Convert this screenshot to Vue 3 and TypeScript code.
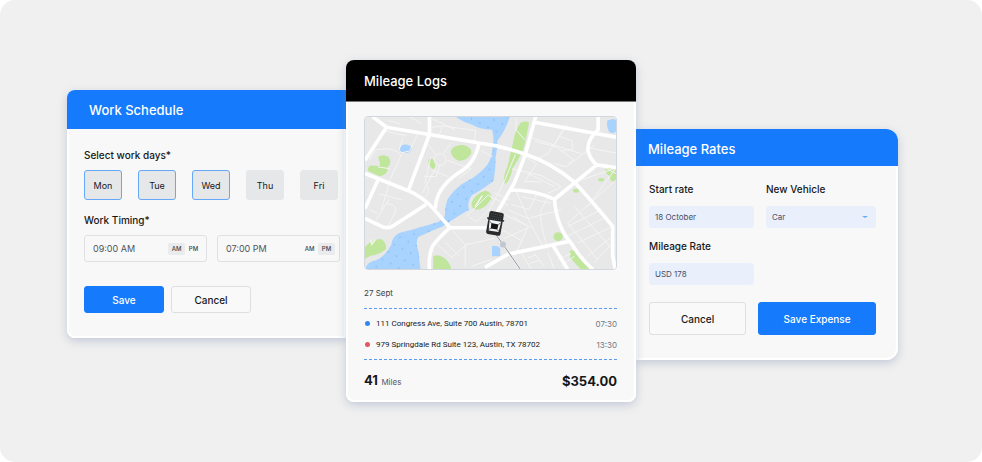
<script setup lang="ts">
import { ref } from 'vue'

interface Day { name: string; on: boolean }
interface Slot { id: string; label: string; value: string; half: 'AM' | 'PM' }
interface Stop { place: string; time: string; kind: 'start' | 'end' }

const days = ref<Day[]>([
  { name: 'Mon', on: true },
  { name: 'Tue', on: true },
  { name: 'Wed', on: true },
  { name: 'Thu', on: false },
  { name: 'Fri', on: false },
])
const slots = ref<Slot[]>([
  { id: 'from', label: 'From', value: '09:00 AM', half: 'AM' },
  { id: 'to', label: 'To', value: '07:00 PM', half: 'PM' },
])
const halves = ['AM', 'PM'] as const
const stops: Stop[] = [
  { place: '111 Congress Ave, Suite 700 Austin, 78701', time: '07:30', kind: 'start' },
  { place: '979 Springdale Rd Suite 123, Austin, TX 78702', time: '13:30', kind: 'end' },
]
const startDate = ref('18 October')
const vehicle = ref('Car')
const rate = ref('USD 178')
</script>

<template>
  <main class="stage">
    <section class="card schedule">
      <h2 class="head">Work Schedule</h2>
      <div class="body">
        <h3 class="label">Select work days*</h3>
        <div class="days">
          <button v-for="d in days" :key="d.name" type="button" class="day" :class="{ on: d.on }" :aria-pressed="d.on" @click="d.on = !d.on">{{ d.name }}</button>
        </div>
        <h3 class="label">Work Timing*</h3>
        <div class="slots">
          <div v-for="s in slots" :key="s.id" class="slot">
            <input :id="s.id" v-model="s.value" type="text" :aria-label="s.label" />
            <button v-for="h in halves" :key="h" type="button" class="half" :class="{ on: s.half === h }" :aria-pressed="s.half === h" @click="s.half = h">{{ h }}</button>
          </div>
        </div>
        <div class="actions">
          <button type="button" class="btn primary">Save</button>
          <button type="button" class="btn">Cancel</button>
        </div>
      </div>
    </section>

    <section class="card logs">
      <h2 class="head">Mileage Logs</h2>
      <div class="body">
        <svg class="map" viewBox="27 18 759 462" preserveAspectRatio="xMidYMid slice" aria-hidden="true">
          <defs>
            <pattern id="dots" width="44" height="36" patternUnits="userSpaceOnUse" patternTransform="rotate(-12)">
              <circle cx="6" cy="6" r="2" fill="#72abea" />
              <circle cx="28" cy="24" r="2" fill="#72abea" />
            </pattern>
            <path id="river" d="M300 18Q325 36 350 42Q372 56 411 58Q418 80 414 104Q412 140 398 162Q385 180 355 202L320 222Q290 245 275 272Q268 300 268 320L250 336Q180 358 130 370Q108 382 107 405Q90 440 60 452Q34 455 27 480H195Q190 450 190 430Q178 400 188 382Q230 362 262 350Q310 318 342 300Q334 280 350 256Q380 240 416 212Q422 180 422 140Q428 110 427 92Q452 60 465 18Z" />
          </defs>
          <rect x="27" y="18" width="759" height="462" fill="#e8e8e8" />
          <use href="#river" fill="#a9d3ff" />
          <use href="#river" fill="url(#dots)" />
          <g fill="#a9d3ff">
            <ellipse cx="150" cy="115" rx="18" ry="13" />
            <path d="M760 30Q778 22 786 28V62Q776 74 764 62Q756 44 760 30Z" />
            <path d="M411 410Q424 405 436 415V440H411Z" />
          </g>
          <g fill="#c0e69c">
            <path d="M66 140Q82 130 98 140Q110 158 96 170Q98 194 72 198Q50 190 36 182Q34 168 46 166Q60 166 72 168Q74 156 66 140Z" />
            <path d="M286 122Q295 102 325 104Q352 112 348 130Q336 150 312 152Q288 144 286 122Z" />
            <path d="M218 150Q226 138 236 150Q244 162 236 178Q220 172 218 150Z" />
            <path d="M350 278Q358 252 390 242Q412 244 408 268Q388 300 362 300Q346 296 350 278Z" />
            <path d="M27 412Q48 388 76 388Q94 400 90 420Q64 438 46 438L27 448Z" />
            <path d="M233 440Q252 432 270 448Q286 464 288 480H233Z" />
            <path d="M498 36Q514 30 523 36Q518 70 505 120Q490 150 474 174Q460 226 448 220Q444 196 458 170Q466 130 474 100Q480 60 498 36Z" />
            <path d="M754 174H786V214Q766 218 768 198Q752 190 754 174Z" />
            <ellipse cx="741" cy="209" rx="9" ry="5" />
            <ellipse cx="665" cy="242" rx="9" ry="6" />
            <ellipse cx="611" cy="381" rx="14" ry="13" />
            <path d="M646 424Q662 418 672 434L704 462V480H680L648 446Z" />
          </g>
          <g fill="none" stroke="#f4f4f4" stroke-width="3" stroke-linejoin="round">
            <path d="M98 30L134 40M160 18L198 38M80 60L152 76M186 70L162 122L136 128M60 118Q120 108 136 136L104 206L88 262M60 116L40 150M66 170L104 176M142 80L130 120M222 52L262 46L362 60L358 92M262 46L250 78M230 24L300 58M226 140L208 220Q230 240 210 262M242 170L200 250M276 150L348 176L310 204M264 128L290 96M240 130L214 98M252 168L242 200L206 198M280 200L228 180M88 262L76 300M70 252L140 270M100 268L60 330M92 282Q120 280 120 304L94 354M40 300L66 310M150 320L204 292M378 120L412 140M240 400L290 444L340 400M290 360L330 406L420 386M270 398L310 438M330 406V470M350 470L410 450M334 320L400 254M342 322L366 336L404 296" />
            <circle cx="254" cy="148" r="18" />
            <path d="M484 24V58L510 88M640 42L580 130L540 150M530 82L680 130M540 92L606 110L660 150L640 160M618 78L654 92V118L624 120M632 40L600 104M700 112L786 128M722 104L636 170L600 160M718 156L786 190M660 216L786 174M786 174L700 290M640 340L786 210M472 176L560 196L620 230L580 250M510 138L546 160L510 214L560 216M520 190L600 230M482 132L444 224L402 300M400 256L460 286M416 248L466 270M460 300L520 326L620 300M470 284L520 298M484 244L520 326L570 420M550 246L522 300M580 262L560 300Q552 330 580 420M590 280L500 260M474 320L520 350L480 440M440 310L530 354M420 348L506 396M446 388L520 354M500 430L530 480M518 445L544 437M524 462L556 452M540 432L570 472M580 430L600 480M640 350L740 300M640 380L760 320M670 400L776 350M660 290L776 420M640 340L730 450M720 460L776 400M700 440L776 380M610 450L650 432M620 470L660 440" />
          </g>
          <g fill="none" stroke="#fff" stroke-width="11" stroke-linejoin="round">
            <path d="M50 18L92 50L222 72L372 98Q440 106 512 132Q590 158 660 216Q710 270 776 350V440L784 480" />
            <path d="M92 50L27 150M222 18V72L158 242M372 98Q360 160 310 188Q240 236 240 296M27 190L158 242Q200 260 232 294L284 354M68 206L27 296M27 326L82 352Q100 358 116 346L212 284M284 354H410M284 354Q244 390 230 412Q218 446 222 480" />
            <path d="M543 18L512 132L480 216L402 350M543 36L786 80M732 18V58Q696 90 702 124Q710 150 728 164L786 172M728 164L600 268M464 240Q540 240 600 268Q606 350 650 400Q680 450 716 480M390 474L460 434L650 394M596 408L640 480" />
          </g>
          <path d="M360 290L382 256M44 390L48 404L58 390" stroke="#f7f7f7" stroke-width="4" fill="none" />
          <path d="M422 374L444 404L497 480" stroke="#f4f4f4" stroke-width="7" fill="none" />
          <path d="M422 374L444 404L497 480" stroke="#8e939d" stroke-width="3" fill="none" />
          <circle cx="444" cy="405" r="9" fill="#c0c7d1" />
          <g transform="translate(420 341) rotate(10)">
            <rect x="-22" y="-35" width="44" height="70" rx="6" fill="#292b2d" />
            <path d="M-26 -12H26" stroke="#292b2d" stroke-width="4" />
            <path d="M-16 -27H17M-17 -20H17M-17 -13H17" stroke="#4c4f52" stroke-width="3" stroke-dasharray="3 3" />
            <path d="M-18 -8H18L15 24H-15Z" fill="#f3f3f3" />
            <path d="M-11 1H11L10 17H-10Z" fill="#151617" />
            <path d="M-17 -4L-11 1M17 -4L11 1M-15 21L-10 17M15 21L10 17" stroke="#292b2d" stroke-width="2" />
          </g>
        </svg>
        <p class="date">27 Sept</p>
        <ul class="stops">
          <li v-for="s in stops" :key="s.time">
            <span class="dot" :class="s.kind"></span>
            <span class="place">{{ s.place }}</span>
            <time>{{ s.time }}</time>
          </li>
        </ul>
        <div class="total">
          <p><strong>41</strong> <span>Miles</span></p>
          <strong>$354.00</strong>
        </div>
      </div>
    </section>

    <section class="card rates">
      <h2 class="head">Mileage Rates</h2>
      <div class="body">
        <div class="fields">
          <div class="field">
            <label class="label" for="start">Start rate</label>
            <input id="start" v-model="startDate" class="box" type="text" />
          </div>
          <div class="field">
            <label class="label" for="vehicle">New Vehicle</label>
            <div class="pick">
              <select id="vehicle" v-model="vehicle" class="box"><option>Car</option></select>
              <svg class="caret" viewBox="0 0 6 4" aria-hidden="true"><path d="M0 1H6L3 3Z" fill="#69abf7" /></svg>
            </div>
          </div>
          <div class="field">
            <label class="label" for="rate">Mileage Rate</label>
            <input id="rate" v-model="rate" class="box" type="text" />
          </div>
        </div>
        <div class="actions">
          <button type="button" class="btn">Cancel</button>
          <button type="button" class="btn primary">Save Expense</button>
        </div>
      </div>
    </section>
  </main>
</template>

<style>
body { background: #fff; }
</style>

<style scoped>
.stage, .stage * { box-sizing: border-box; }
.stage {
  display: grid;
  grid-template-columns: 279fr 290fr 262fr;
  align-items: start;
  min-height: 100vh;
  padding: 60px 84px 59px 67px;
  border-radius: 15px;
  background: #f0f0f0;
  color: #17181a;
  font-family: Inter, "Liberation Sans", sans-serif;
}
h2, h3, p, ul { margin: 0; padding: 0; font-weight: 500; }
button, input, select { font: inherit; color: inherit; margin: 0; }
button { padding: 0; cursor: pointer; }
.card {
  min-width: 0;
  background: #f8f8f8;
  border-radius: 8px;
  box-shadow: 0 3px 10px rgba(110, 130, 165, 0.35), inset 0 0 0 2px #fff;
}
.head {
  display: flex;
  align-items: center;
  color: #fff;
  background: #157afb;
  font-size: 13px;
  line-height: 16px;
}
.label { display: block; font-size: 10px; line-height: 16px; font-weight: 500; }
.actions { display: flex; }
.btn {
  border: 1px solid #dddfe3;
  border-radius: 3px;
  background: #f9f9f9;
  font-size: 10px;
  font-weight: 500;
}
.btn.primary { border-color: #157afb; background: #157afb; color: #fff; }

.schedule { margin-top: 30px; border-radius: 8px 0 0 8px; }
.schedule .head { height: 39px; padding: 0 22px; border-radius: 8px 0 0 0; }
.schedule .body { padding: 18px 6px 25px 17px; }
.days { display: grid; grid-template-columns: repeat(5, 1fr); gap: 16px; margin: 7px 2px 12px 0; }
.day { height: 30px; border: 1px solid #e6e7e9; border-radius: 3px; background: #e6e7e9; font-size: 9px; }
.day.on { border-color: #65a8f8; }
.slots { display: grid; grid-template-columns: repeat(2, minmax(0, 1fr)); gap: 10px; margin: 7px 0 24px; }
.slot { display: flex; align-items: center; height: 27px; padding: 0 4px 0 8px; border: 1px solid #dfe1e4; border-radius: 3px; }
.slot input { flex: 1; min-width: 0; padding: 0; border: 0; background: none; color: #51545a; font-size: 9px; }
.half { width: 17px; height: 12px; border: 0; border-radius: 2px; background: none; color: #42454a; font-size: 6px; font-weight: 500; }
.half.on { background: #eaebec; }
.schedule .actions { gap: 7px; }
.schedule .btn { width: 80px; height: 27px; }

.logs { position: relative; z-index: 1; }
.logs .head { height: 42px; padding: 0 18px; background: #000; border-radius: 8px 8px 0 0; border-bottom: 1px solid #777; }
.logs .body { padding: 14px 19px 6px 18px; }
.map { display: block; width: 100%; aspect-ratio: 253 / 154; border: 1px solid #d2d6dd; border-radius: 4px; }
.date { margin: 15px 0 7px; font-size: 8px; line-height: 16px; color: #3c3f43; font-weight: 400; }
.stops {
  list-style: none;
  padding: 4px 0;
  border-top: 1px dashed #5a9cf2;
  border-bottom: 1px dashed #5a9cf2;
}
.stops li { display: flex; align-items: center; height: 21px; font-size: 8px; white-space: nowrap; }
.dot { width: 5px; height: 5px; margin: 0 6px 0 1px; border-radius: 50%; background: #3485f4; }
.dot.end { background: #e35862; }
.place { flex: 1; font-family: Roboto, "Liberation Sans", sans-serif; font-weight: 400; }
.stops time { color: #74777d; font-weight: 400; }
.total { display: flex; justify-content: space-between; align-items: center; height: 30px; margin-top: 6px; font-size: 13px; line-height: 16px; }
.total strong { font-weight: 700; }
.total span { font-size: 8px; font-weight: 400; color: #55585d; }

.rates { margin-top: 69px; border-radius: 0 12px 12px 0; }
.rates .head { height: 37px; padding: 2px 12px 0; border-radius: 0 12px 0 0; }
.rates .body { padding: 15px 22px 25px 13px; }
.fields { display: grid; grid-template-columns: 105fr 110fr; gap: 10px 12px; }
.box { display: block; width: 100%; height: 22px; margin-top: 9px; padding: 0 6px; border: 0; border-radius: 3px; background: #eaf0fb; color: #454f6a; font-size: 8px; appearance: none; }
.pick { position: relative; }
.caret { position: absolute; right: 8px; top: 9px; width: 6px; height: 4px; }
.rates .actions { gap: 12px; margin-top: 17px; }
.rates .btn { flex: 97; height: 33px; }
.rates .btn.primary { flex: 118; }
</style>
